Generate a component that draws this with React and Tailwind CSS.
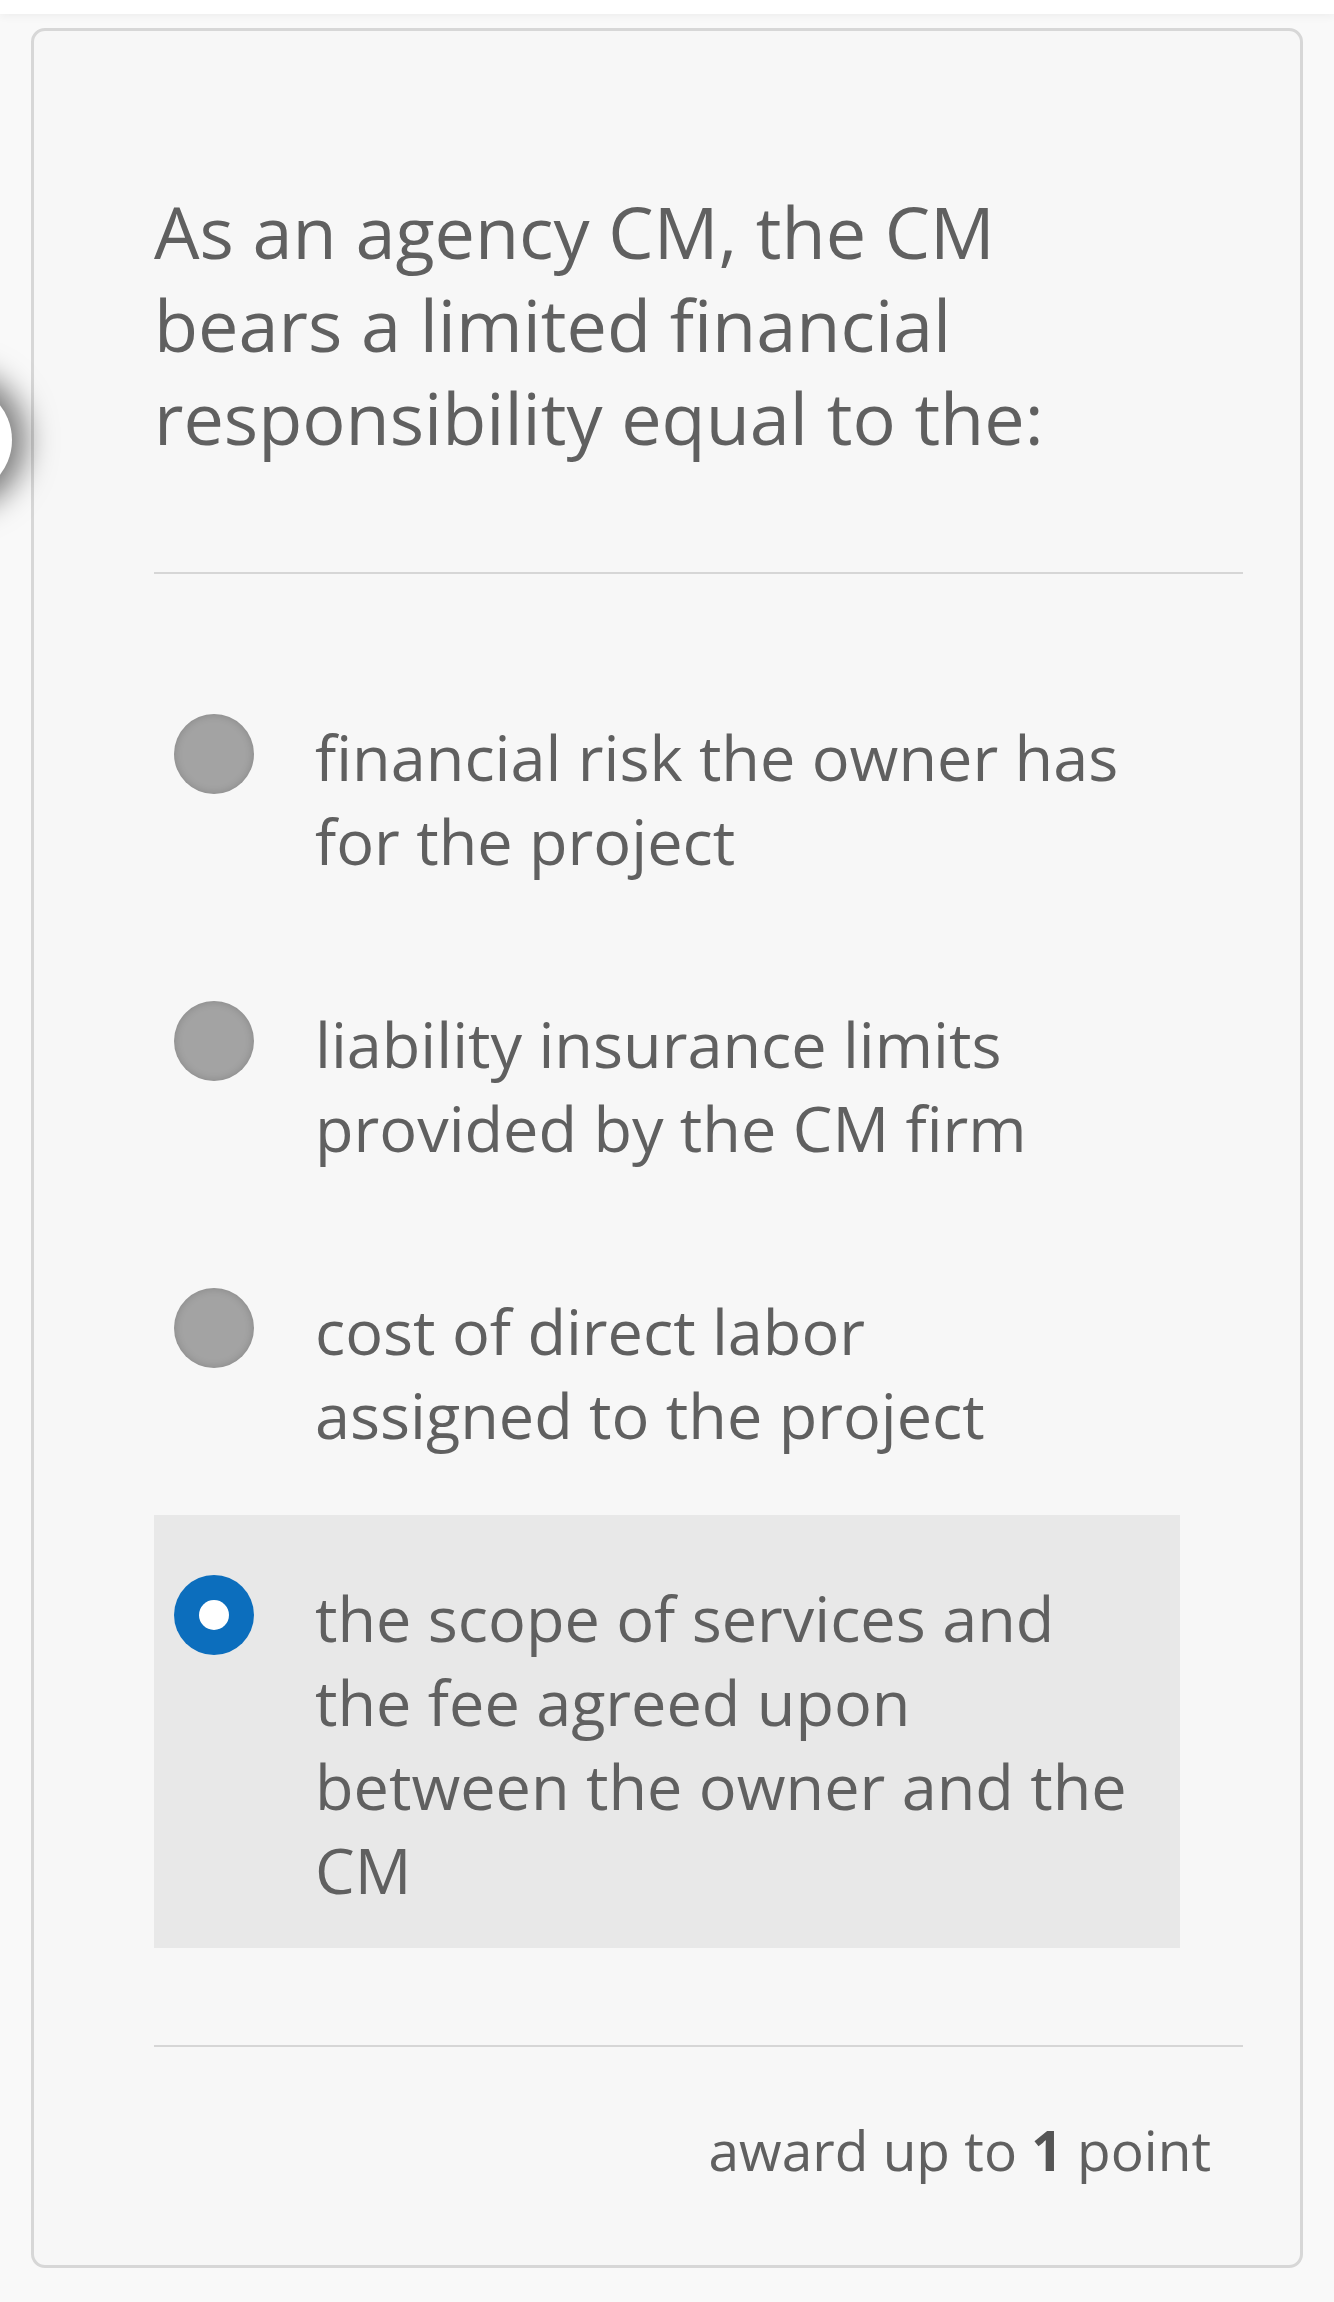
import React from "react";

const options = [
  { text: "financial risk the owner has for the project", selected: false },
  { text: "liability insurance limits provided by the CM firm", selected: false },
  { text: "cost of direct labor assigned to the project", selected: false },
  {
    text: "the scope of services and the fee agreed upon between the owner and the CM",
    selected: true,
  },
];

function Radio({ selected }) {
  if (selected) {
    return (
      <div className="shrink-0 w-[80px] h-[80px] rounded-full bg-[#0c6ebd] flex items-center justify-center">
        <div className="w-[30px] h-[30px] rounded-full bg-white" />
      </div>
    );
  }
  return (
    <div className="shrink-0 w-[80px] h-[80px] rounded-full bg-[#a3a3a3] shadow-[inset_0_0_8px_rgba(0,0,0,0.18)]" />
  );
}

export default function App() {
  return (
    <div
      className="relative min-h-[2302px] bg-[#f9f9f9] overflow-hidden text-[#606060]"
      style={{ fontFamily: '"Open Sans", "Noto Sans", sans-serif' }}
    >
      {/* header edge */}
      <div className="h-[14px] bg-white shadow-[0_2px_10px_rgba(0,0,0,0.05)]" />

      {/* floating button peeking from the left edge */}
      <div className="absolute z-10 left-[-100px] top-[384px] w-[112px] h-[112px] rounded-full bg-white shadow-[0_0_30px_14px_rgba(0,0,0,0.5)]" />

      <div className="ml-[31px] mt-[14px] w-[1272px] border-[3px] border-[#d7d7d7] rounded-[14px] bg-[#f7f7f7] pl-[120px] pr-[57px]">
        <h2 className="pt-[154px] pr-[100px] text-[72px] leading-[93px] font-normal">
          As an agency CM, the CM bears a limited financial responsibility equal to the:
        </h2>

        <div className="mt-[108px] h-[2px] bg-[#d6d6d6]" />

        <div className="mt-[80px] flex flex-col gap-[22px] w-[1026px]">
          {options.map((o) => (
            <div
              key={o.text}
              className={
                "flex items-start pl-[20px] pr-[50px] pt-[60px] pb-[36px] " +
                (o.selected ? "bg-[#e8e8e8]" : "")
              }
            >
              <Radio selected={o.selected} />
              <p className="ml-[61px] mt-[1px] text-[63px] leading-[84px]">{o.text}</p>
            </div>
          ))}
        </div>

        <div className="mt-[97px] h-[2px] bg-[#d6d6d6]" />

        <p className="mt-[65px] pb-[77px] pr-[32px] text-right text-[55px] leading-[76px]">
          award up to <span className="font-bold text-[#555555]">1</span> point
        </p>
      </div>
    </div>
  );
}
